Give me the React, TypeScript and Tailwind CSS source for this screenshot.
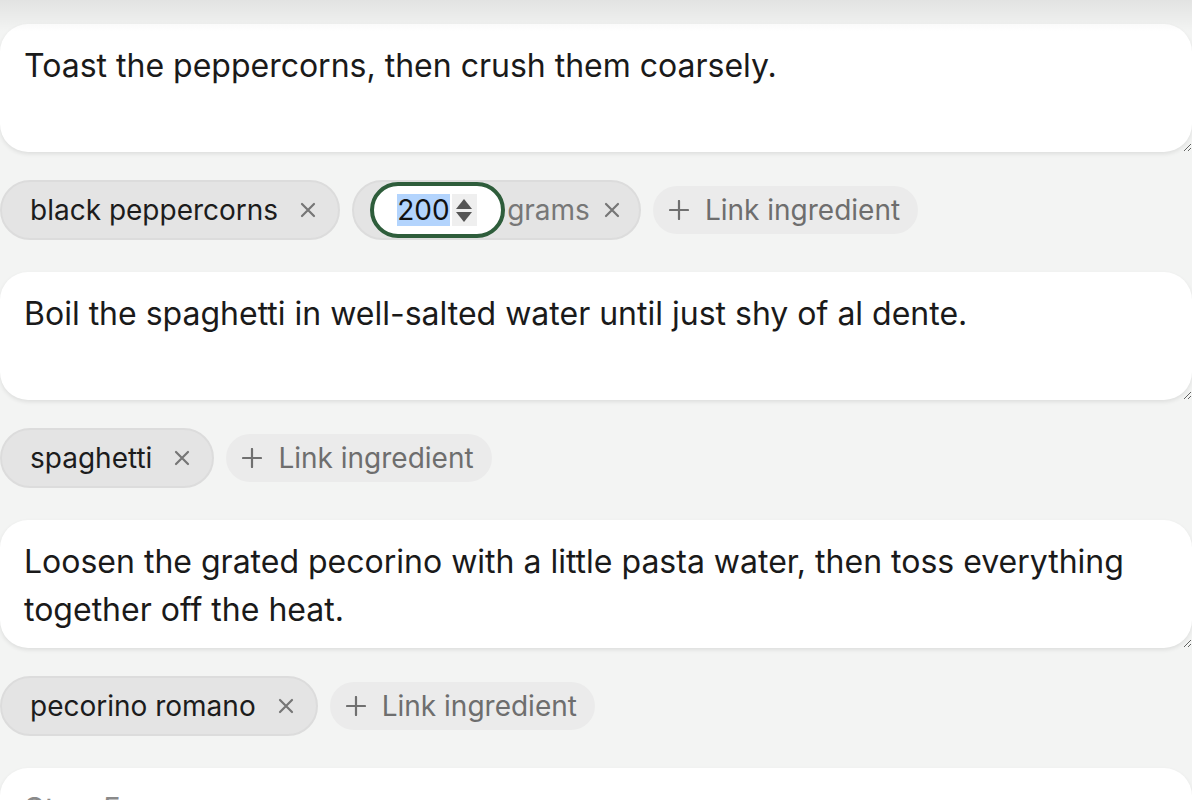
import React from "react";

const XIcon = () => (
  <svg width="8" height="8" viewBox="0 0 8 8" fill="none">
    <path d="M1 1L7 7M7 1L1 7" stroke="#767676" strokeWidth="1.1" strokeLinecap="round" />
  </svg>
);

const PlusIcon = () => (
  <svg width="10" height="10" viewBox="0 0 10 10" fill="none">
    <path d="M5 0.5V9.5M0.5 5H9.5" stroke="#707070" strokeWidth="1.1" strokeLinecap="round" />
  </svg>
);

const Chip = ({ label }: { label: string }) => (
  <div className="flex h-[30px] items-center rounded-full border border-[#dcdcdc] bg-[#e4e4e4] pl-[14px] pr-[5px] text-[14px] text-[#1c1c1c]">
    <span>{label}</span>
    <span className="ml-[5px] flex h-5 w-5 items-center justify-center">
      <XIcon />
    </span>
  </div>
);

const LinkChip = () => (
  <div className="flex h-6 items-center gap-[8px] rounded-full bg-[#ebebeb] pl-2 pr-[9px] text-[14px] text-[#6e6e6e]">
    <PlusIcon />
    <span>Link ingredient</span>
  </div>
);

const QtyChip = () => (
  <div className="flex h-[30px] items-center rounded-full border border-[#dcdcdc] bg-[#e4e4e4] pl-[8px] pr-[3.5px] text-[14px]">
    <div className="flex h-[28px] w-[67.5px] items-center rounded-full border-2 border-[#2e5d3b] bg-white pl-[11.5px]">
      <span className="bg-[#b3d4fd] text-[14px] leading-4 text-[#111]">200</span>
      <span className="ml-[1px] flex h-[16px] w-[12.5px] flex-col items-center justify-center gap-[1.5px] bg-[#efefef]">
        <svg width="8" height="5" viewBox="0 0 8 5">
          <path d="M4 0L8 5H0Z" fill="#555" />
        </svg>
        <svg width="8" height="5" viewBox="0 0 8 5">
          <path d="M0 0H8L4 5Z" fill="#555" />
        </svg>
      </span>
    </div>
    <span className="ml-[1px] text-[#777]">grams</span>
    <span className="ml-[1px] flex h-5 w-5 items-center justify-center">
      <XIcon />
    </span>
  </div>
);

const Step = ({ text, placeholder }: { text: string; placeholder?: string }) => (
  <textarea
    className="block h-[64px] w-full resize-y rounded-[14px] bg-white px-3 pt-[9px] pb-[7px] text-[16px] leading-6 text-[#1a1a1a] shadow-[0_1px_2px_rgba(0,0,0,0.09)] outline-none placeholder:text-[#8a8a8a]"
    defaultValue={text}
    placeholder={placeholder}
  />
);

export default function App() {
  return (
    <div className="relative min-h-[400px] w-[596px] overflow-hidden bg-[#f3f4f3] font-['Inter',sans-serif] [zoom:2]">
      <div className="pointer-events-none absolute inset-x-0 top-0 z-10 h-[16px] bg-gradient-to-b from-[rgba(0,0,0,0.07)] to-transparent" />
      <div className="flex flex-col pt-3">
        <Step text="Toast the peppercorns, then crush them coarsely." />
        <div className="mt-[14px] flex items-center gap-[6px]">
          <Chip label="black peppercorns" />
          <QtyChip />
          <LinkChip />
        </div>
        <div className="mt-4">
          <Step text="Boil the spaghetti in well-salted water until just shy of al dente." />
        </div>
        <div className="mt-[14px] flex items-center gap-[6px]">
          <Chip label="spaghetti" />
          <LinkChip />
        </div>
        <div className="mt-4">
          <Step text="Loosen the grated pecorino with a little pasta water, then toss everything together off the heat." />
        </div>
        <div className="mt-[14px] flex items-center gap-[6px]">
          <Chip label="pecorino romano" />
          <LinkChip />
        </div>
        <div className="mt-4">
          <Step text="" placeholder="Step 5" />
        </div>
      </div>
    </div>
  );
}
